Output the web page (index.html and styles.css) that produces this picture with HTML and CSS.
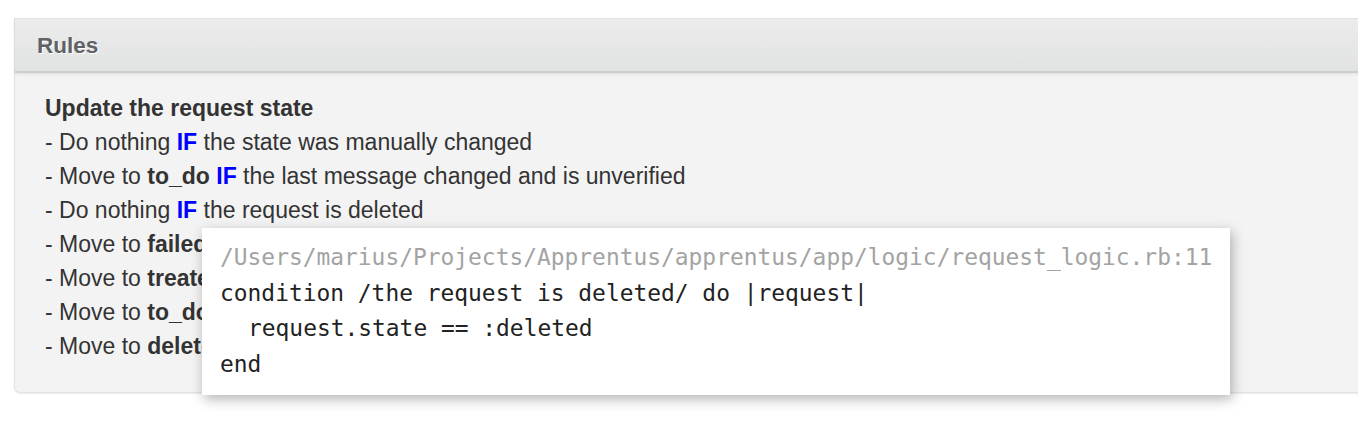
FILE: index.html
```html
<!DOCTYPE html>
<html>
<head>
<meta charset="utf-8">
<link rel="stylesheet" href="styles.css">
</head>
<body>
<div class="panel">
  <div class="panel-header">Rules</div>
  <div class="panel-body">
    <div class="rule-title">Update the request state</div>
    <div class="rule">- Do nothing <span class="kw">IF</span> the state was manually changed</div>
    <div class="rule">- Move to <b>to_do</b> <span class="kw">IF</span> the last message changed and is unverified</div>
    <div class="rule">- Do nothing <span class="kw">IF</span> the request is deleted</div>
    <div class="rule">- Move to <b>failed</b> <span class="kw">IF</span> the request is expired</div>
    <div class="rule">- Move to <b>treated</b> <span class="kw">IF</span> the request is answered</div>
    <div class="rule">- Move to <b>to_do</b> <span class="kw">IF</span> the request is new</div>
    <div class="rule">- Move to <b>deleted</b> <span class="kw">IF</span> the request is removed</div>
    <div class="tooltip">
      <div class="path">/Users/marius/Projects/Apprentus/apprentus/app/logic/request_logic.rb:11</div>
      <div class="code">condition /the request is deleted/ do |request|</div>
      <div class="code indent">request.state == :deleted</div>
      <div class="code">end</div>
    </div>
  </div>
</div>
</body>
</html>
```
FILE: styles.css
```css
html {
  overflow: hidden;
  background: #ffffff;
}
body {
  margin: 0;
  min-height: 422px;
  box-sizing: border-box;
  padding: 18px 0 0 14px;
  font-family: "Liberation Sans", Arial, sans-serif;
  color: #333333;
  background: #ffffff;
}
.panel {
  margin-right: -30px;
  background: #f3f3f3;
  border: 1px solid #e2e2e2;
  border-top: none;
  border-radius: 0 0 6px 6px;
  box-shadow: 0 1px 2px rgba(0,0,0,0.08);
  position: relative;
  height: 375px;
  box-sizing: border-box;
}
.panel-header {
  height: 55px;
  box-sizing: border-box;
  border-top: 1px solid #e2e2e2;
  border-bottom: 2px solid #cdcdcd;
  background: linear-gradient(#ececec, #e1e2e2);
  box-shadow: 0 2px 3px rgba(0,0,0,0.06);
  padding-left: 22px;
  font-size: 22.5px;
  font-weight: bold;
  line-height: 54px;
  color: #606366;
  text-shadow: 1px 1px 0 #ffffff;
}
.panel-body {
  padding: 18px 30px 0 30px;
  font-size: 23px;
  line-height: 34px;
}
.rule-title {
  font-weight: bold;
}
.rule b {
  font-weight: bold;
}
.kw {
  color: #0000ff;
  font-weight: bold;
}
.tooltip {
  position: absolute;
  left: 187px;
  top: 210px;
  background: #ffffff;
  padding: 12px 18px 13px 18px;
  box-shadow: 2px 4px 12px rgba(0,0,0,0.3);
  font-family: "DejaVu Sans Mono", monospace;
  font-size: 22.9px;
  line-height: 35.5px;
  color: #222222;
}
.path, .code {
  white-space: pre;
}
.path {
  color: #a3a3a3;
}
.indent {
  padding-left: 28px;
}
```
